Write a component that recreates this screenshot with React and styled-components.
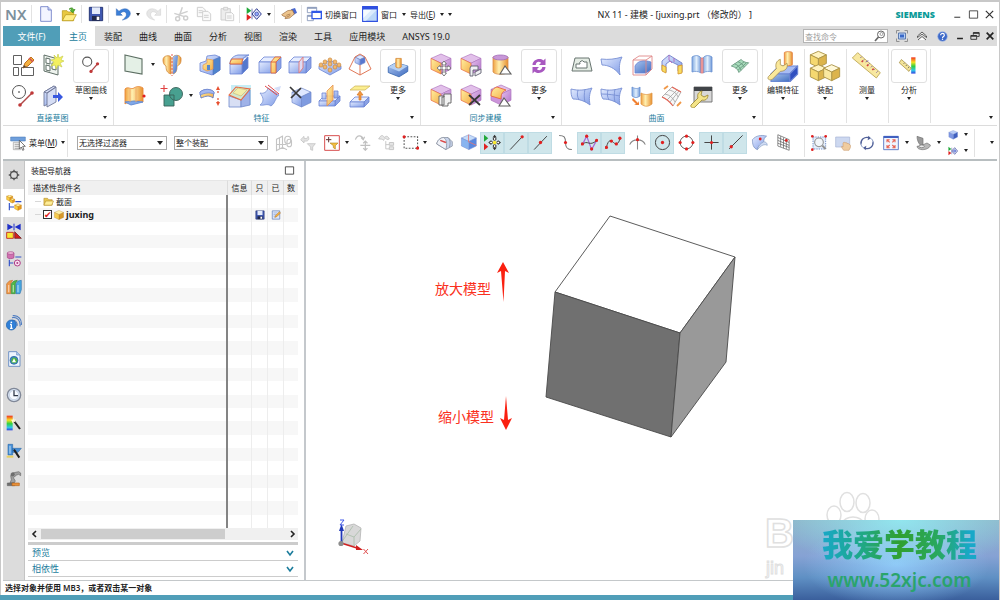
import React, { useState } from 'react';
import styled, { createGlobalStyle } from 'styled-components';

const GlobalStyle = createGlobalStyle`
  * {
    box-sizing: border-box;
  }

  body {
    margin: 0;
    font-family: 'Noto Sans', 'Noto Sans CJK SC', sans-serif;
    font-size: 8px;
    color: #222222;
  }

  button,
  input,
  select {
    font-family: inherit;
    font-size: inherit;
    color: inherit;
    margin: 0;
    padding: 0;
    border: none;
    background: none;
  }

  svg {
    display: block;
    flex: none;
  }
`;

/* ---------- Drawing helpers ---------- */

const Gradients = () => (
  <svg width="0" height="0" style={{ position: 'absolute' }} aria-hidden="true">
    <defs>
      <linearGradient id="blue" x1="0" y1="0" x2="1" y2="1">
        <stop offset="0" stopColor="#e4ecff" />
        <stop offset="1" stopColor="#7f9be6" />
      </linearGradient>
      <linearGradient id="deep" x1="0" y1="0" x2="1" y2="1">
        <stop offset="0" stopColor="#a9c3ee" />
        <stop offset="1" stopColor="#3f6cc0" />
      </linearGradient>
      <linearGradient id="gold" x1="0" y1="0" x2="1" y2="1">
        <stop offset="0" stopColor="#fff0a0" />
        <stop offset="1" stopColor="#f4ac48" />
      </linearGradient>
      <linearGradient id="plum" x1="0" y1="0" x2="1" y2="1">
        <stop offset="0" stopColor="#e6c4ee" />
        <stop offset="1" stopColor="#b070c8" />
      </linearGradient>
      <linearGradient id="tube" x1="0" y1="0" x2="1" y2="0">
        <stop offset="0" stopColor="#7fa8e0" />
        <stop offset="0.5" stopColor="#e2effc" />
        <stop offset="1" stopColor="#6f98d8" />
      </linearGradient>
      <linearGradient id="pipe" x1="0" y1="0" x2="1" y2="0">
        <stop offset="0" stopColor="#f0a040" />
        <stop offset="0.4" stopColor="#fff0b0" />
        <stop offset="1" stopColor="#e89030" />
      </linearGradient>
      <linearGradient id="rainbow" x1="0" y1="0" x2="0" y2="1">
        <stop offset="0" stopColor="#f03020" />
        <stop offset="0.3" stopColor="#f8e020" />
        <stop offset="0.55" stopColor="#30d040" />
        <stop offset="0.8" stopColor="#30c8e8" />
        <stop offset="1" stopColor="#3040e0" />
      </linearGradient>
    </defs>
  </svg>
);

const Hex = ({ x = 2, y = 2, s = 20, top = '#dfe8ff', left = 'url(#blue)', right = '#7f9be0', line = '#7088cc', edge }) => {
  const p = (...list) => list.map(([a, b]) => `${x + a * s},${y + b * s}`).join(' ');
  return (
    <g stroke={line} strokeWidth="0.7" strokeLinejoin="round">
      <polygon points={p([0.5, 0], [1, 0.22], [0.5, 0.46], [0, 0.22])} fill={top} />
      <polygon points={p([0.5, 0.46], [1, 0.22], [1, 0.76], [0.5, 1])} fill={right} />
      <polygon points={p([0, 0.22], [0.5, 0.46], [0.5, 1], [0, 0.76])} fill={left} stroke={edge || line} />
    </g>
  );
};

const Slab = ({ x = 2, y = 6, w = 14, h = 10, d = 5, top = '#e6edff', front = 'url(#blue)', side = '#8ba2e4', line = '#6a84d4' }) => (
  <g stroke={line} strokeWidth="0.8" strokeLinejoin="round">
    <path d={`M${x} ${y + d}l${d} ${-d}h${w}l${-d} ${d}z`} fill={top} />
    <path d={`M${x + w} ${y + d}l${d} ${-d}v${h}l${-d} ${d}z`} fill={side} />
    <rect x={x} y={y + d} width={w} height={h} fill={front} />
  </g>
);

const Dots = ({ at, r = 1.8, fill = '#e02020' }) => (
  <g fill={fill} stroke="none">
    {at.map(([x, y]) => (
      <circle key={`${x}-${y}`} cx={x} cy={y} r={r} />
    ))}
  </g>
);

const SyncCube = () => <Hex y={1} s={20} top="#e2c0ea" left="url(#gold)" right="url(#plum)" line="#b078c0" edge="#e86840" />;

const wrench = 'M4 22l7-7c-1-3 0-6 4-7l-1 4 3 2 4-2c0 4-3 6-6 5l-7 7c-2 2-5 0-4-2z';

const icons = {
  newFile: (
    <g fill="#f3f5ff" stroke="#7080c8" strokeWidth="1.3">
      <path d="M4 1h11l5 5v17H4z" />
      <path d="M15 1v5h5" fill="#c5cff5" />
    </g>
  ),
  open: (
    <g stroke="#b89818" strokeWidth="1.1" strokeLinejoin="round">
      <path d="M2 7h7l2 2h8v13H2z" fill="#e8c840" />
      <path d="M2 22l5-9h16l-5 9z" fill="#ffee88" />
      <path d="M12 5c3-3 6-3 7 1l2-1-3 5-4-3 2-1c-1-2-2-2-4-1z" fill="#58b838" stroke="#388820" />
    </g>
  ),
  save: (
    <g>
      <path d="M2 2h20v20H2z" fill="#4058b0" stroke="#203070" strokeWidth="1.4" />
      <path d="M6 2h12v10H6z" fill="#e4ebfa" />
      <path d="M6 15h12v7H6z" fill="#202848" />
      <path d="M13 16h4v5h-4z" fill="#fff" />
    </g>
  ),
  undo: <path d="M2 4v10h9l-3-3c4-4 10-3 9 3-1 3-3 5-6 7 7-1 12-5 12-10C22 3 12 2 6 8z" fill="#3b7fd8" stroke="#2a60b0" strokeWidth="0.7" />,
  redo: <path d="M22 4v10h-9l3-3c-4-4-10-3-9 3 1 3 3 5 6 7-7-1-12-5-12-10C2 3 12 2 18 8z" fill="#e6e6e6" stroke="#cccccc" strokeWidth="0.7" />,
  cut: (
    <g fill="none" stroke="#cfcfcf" strokeWidth="2.2">
      <path d="M14 2l-5 14M2 11l15 5M22 8l-14 5" />
      <circle cx="7" cy="19" r="3" />
      <circle cx="19" cy="18" r="3" />
    </g>
  ),
  copy: (
    <g fill="#fafafa" stroke="#cccccc" strokeWidth="1.4">
      <path d="M2 2h8l4 4v10H2z" />
      <path d="M10 8h8l4 4v10H10z" />
      <path d="M4 7h6M4 10h6M12 14h7M12 17h7" />
    </g>
  ),
  paste: (
    <g fill="#ededed" stroke="#cccccc" strokeWidth="1.4">
      <path d="M3 4h14v17H3z" />
      <path d="M7 2h6v4H7z" />
      <path d="M10 10h9l3 3v9H10z" fill="#fafafa" />
      <path d="M12 15h7M12 18h7" />
    </g>
  ),
  play: (
    <g>
      <path d="M1 2l7 5-7 5z" fill="#20a838" />
      <path d="M1 12l7 5-7 5z" fill="#e02020" />
      <path d="M9 12l7-8 7 8-7 8z" fill="#e4eaff" stroke="#303c90" strokeWidth="1.5" />
      <path d="M9 4v16" stroke="#303c90" strokeWidth="1" />
      <circle cx="16" cy="12" r="2.8" fill="#90a8ff" stroke="#303c90" />
    </g>
  ),
  hand: (
    <g>
      <path d="M15 5l6-2 3 7-6 4z" fill="#4868d0" />
      <path d="M1 13l9-6 7-1 3 6-7 6-7 1 1-3-4-1z" fill="#edc48c" stroke="#98683c" strokeWidth="1" />
      <path d="M8 14l6-2M8 17l6-3" stroke="#98683c" fill="none" />
    </g>
  ),
  switchWindow: (
    <g fill="#fff" stroke="#8898b8" strokeWidth="1.3">
      <path d="M2 2h14v8H2zM2 14h9v8H2z" />
      <path d="M2 3h14M2 15h9" strokeWidth="2.5" />
      <path d="M9 8h14v11H9z" stroke="#3058e8" strokeWidth="2" />
      <path d="M9 9h14" stroke="#3058e8" strokeWidth="3" />
    </g>
  ),
  window: (
    <g>
      <path d="M1 1h22v22H1z" fill="#bcd8f8" stroke="#3050e0" strokeWidth="1.8" />
      <path d="M2 6h20L6 22H2z" fill="#dcecfd" />
      <path d="M2 6h12L2 18z" fill="#f6fbff" />
      <path d="M1 1h22v4H1z" fill="#3050e0" />
    </g>
  ),
  minimize: <path d="M5 18h13" stroke="#444" strokeWidth="2.4" />,
  maximize: <path d="M3 4h18v16H3z" fill="none" stroke="#444" strokeWidth="2" />,
  close: <path d="M4 4l16 16M20 4L4 20" stroke="#333" strokeWidth="2.6" />,
  boldMinimize: <path d="M5 18h14" stroke="#222" strokeWidth="3.6" />,
  boldClose: <path d="M4 4l16 16M20 4L4 20" stroke="#222" strokeWidth="4" />,
  restore: (
    <g fill="none" stroke="#222" strokeWidth="2">
      <path d="M8 9V4h14v9h-5" />
      <path d="M8 5h14" strokeWidth="3" />
      <path d="M2 11h14v9H2z" />
      <path d="M2 12h14" strokeWidth="3" />
    </g>
  ),
  fullscreen: (
    <g fill="none" stroke="#888" strokeWidth="1.8">
      <path d="M1 7V1h6M17 1h6v6M23 17v6h-6M7 23H1v-6" />
      <path d="M5 6h14v12H5z" fill="#b8d0f4" stroke="#5070a8" />
      <path d="M8 9h8v6H8z" fill="#3868c8" stroke="none" />
    </g>
  ),
  collapse: <path d="M3 12l9-8 9 8v3l-9-7-9 7zM4 20l8-7 8 7" fill="#fff" stroke="#444" strokeWidth="1.7" />,
  help: (
    <g>
      <circle cx="12" cy="12" r="10.500" fill="#3c68c8" stroke="#a0b8e8" strokeWidth="1.4" />
      <path d="M8 9c0-5 8-5 8 0 0 3-4 3-4 6" fill="none" stroke="#fff" strokeWidth="2.6" />
      <circle cx="12" cy="18" r="1.6" fill="#fff" />
    </g>
  ),
  magnifier: (
    <g fill="none" stroke="#666">
      <circle cx="14" cy="9" r="7" strokeWidth="2" />
      <circle cx="15" cy="8" r="3" strokeWidth="1.2" />
      <path d="M9 14l-7 8" strokeWidth="3.4" />
    </g>
  ),

  /* sketch group */
  sketchTask: (
    <g fill="#fff" stroke="#606060" strokeWidth="1">
      <path d="M2.500 2.500h8v9h-8zM2.500 14.500h5v8h-5zM10.500 14.500h12v8h-12z" />
      <path d="M12 15l2-5 6-6 3 3-6 6z" fill="#f4b040" stroke="#c07020" />
      <path d="M18 5l4 4" stroke="#d05050" strokeWidth="1.6" />
      <path d="M12 15l1-3 2 2z" fill="#444" stroke="none" />
    </g>
  ),
  sketch: (
    <g fill="#eef3ee" stroke="#607068" strokeWidth="1">
      <path d="M3 2l14 4v16L3 18z" />
      <path d="M5 5l4 1v5l-4-1zM5 12l4 1v5l-4-1zM11 10l4 1v6l-4-1z" fill="#fff" />
      <path d="M17 1l1 4 4-2-2 4 3 1-4 2 2 4-4-2-2 4-1-4-4 1 3-4-3-2 4-1-1-4 3 3z" fill="#f4f060" stroke="#c8d050" strokeWidth="0.7" />
    </g>
  ),
  profile: (
    <g fill="none" stroke="#555" strokeWidth="1">
      <circle cx="8" cy="8" r="6.500" />
      <path d="M9 21L21 9" stroke="#b04848" strokeWidth="1.4" />
      <Dots at={[[9, 21], [21, 9]]} r={1.800} fill="#c03838" />
      <circle cx="8" cy="8" r="0.500" />
    </g>
  ),
  curveBig: (
    <g fill="none" stroke="#555" strokeWidth="1">
      <circle cx="8.500" cy="8" r="4.200" />
      <path d="M12 17l6-7" stroke="#b04848" strokeWidth="1.2" />
      <Dots at={[[12, 17], [18, 10]]} r={1.500} fill="#c03838" />
    </g>
  ),
  extrudeArrow: (
    <g stroke="#707898" strokeWidth="0.900">
      <path d="M3 8l10-6v15L3 22z" fill="url(#blue)" />
      <path d="M3 8l10-6 2 1-9 6zM6 9l9-6v15l-9 5z" fill="#d5ddf5" />
      <path d="M12 11h5V8l5 5-5 5v-4h-5z" fill="#3858e0" stroke="none" />
    </g>
  ),

  /* feature group */
  datum: <path d="M3 2l17 4v15L3 18z" fill="#e4f0e6" stroke="#5c6e62" strokeWidth="1.1" />,
  revolve: (
    <g stroke="#d08838" strokeWidth="0.800">
      <path d="M3 7c0-5 7-5 8-3v17c-4-1-5-4-5-8-2-1-3-3-3-6z" fill="url(#pipe)" />
      <path d="M13 4c2-3 9-2 8 3 0 4-2 5-4 6 0 5-1 7-4 8z" fill="url(#pipe)" />
      <path d="M13 4c2-2 4-2 5-1l-1 10c0 5-1 7-4 8z" fill="url(#deep)" stroke="none" />
      <path d="M12 1v22" stroke="#e03020" strokeDasharray="2 1.500" />
    </g>
  ),
  pattern: (
    <g stroke="#e88838" strokeWidth="0.900">
      <path d="M3 5c3-3 6 1 9-1s6-2 9 0v14c-3-2-6-1-9 1s-6-2-9 1z" fill="url(#pipe)" />
      <path d="M3 18l6 3 12-3-9-1z" fill="#7fa8e8" stroke="#6088d0" />
      <path d="M8 5v13M14 4v14" stroke="#f0a868" />
      <Dots at={[[22, 12]]} r={1.600} />
    </g>
  ),
  unite: (
    <g stroke="#386058" strokeWidth="0.900">
      <path d="M4 11h10v11H4z" fill="#48a090" />
      <circle cx="16" cy="10" r="6.500" fill="#48a090" />
      <path d="M9 11h5v5" fill="none" />
      <path d="M4 1v7M0.500 4.500h7" stroke="#e04040" strokeWidth="1.1" />
    </g>
  ),
  block: (
    <g>
      <path d="M2 10l6-2 1-5 8-1 5 2v13l-8 5-12-4z" fill="url(#blue)" stroke="#6a84d4" strokeWidth="0.800" />
      <path d="M15 7l7-3v13l-7 5z" fill="#4f84cc" stroke="#5070c0" strokeWidth="0.600" />
      <path d="M5 12l4-2V6l6 1v9l-6 2-4-2z" fill="url(#gold)" stroke="#e89848" strokeWidth="0.700" />
      <path d="M9 12h3v5H9z" fill="#5888cc" />
    </g>
  ),
  blend: (
    <g>
      <Slab x={2} y={4} w={12} h={11} d={6} side="#5478cc" />
      <path d="M2 11c0-5 3-8 8-9h11c-5 1-7 4-7 9z" fill="url(#blue)" stroke="#6a84d4" strokeWidth="0.900" />
      <path d="M2 11c0-2 1-4 2-5h11c-1 1-1 3-1 5z" fill="url(#gold)" stroke="#e06840" strokeWidth="1" />
    </g>
  ),
  trimBody: (
    <g>
      <Slab x={1} y={4} w={17} h={11} d={5} />
      <path d="M13 9l4-5h6l-5 5v11h-5z" fill="url(#gold)" stroke="#e06840" strokeWidth="0.900" />
      <path d="M18 9h-5" stroke="#e06840" />
    </g>
  ),
  splitBody: (
    <g>
      <Slab x={1} y={4} w={17} h={11} d={5} />
      <path d="M11 20V9l4-5v11z" fill="#e0dcf4" stroke="#e07878" strokeWidth="0.900" />
    </g>
  ),
  bumps: (
    <g>
      <path d="M1 13l11-6 11 6v3l-11 6-11-6z" fill="url(#blue)" stroke="#6a84d4" strokeWidth="0.800" />
      <g fill="#f4b868" stroke="#c88840" strokeWidth="0.700">
        {[[12, 7], [7, 9], [17, 9], [3, 12], [12, 11], [21, 12], [7, 14], [17, 14], [12, 17]].map(([x, y]) => (
          <ellipse key={`${x}-${y}`} cx={x} cy={y} rx="1.900" ry="2.100" />
        ))}
      </g>
    </g>
  ),
  draft: (
    <g>
      <Hex x={7} y={2} s={10} right="#5878d0" />
      <path d="M7 4L1 16l11 6 11-6-6-12M12 12v10M7 4l5-3 5 3" fill="none" stroke="#e07858" strokeWidth="1" />
    </g>
  ),
  boss: (
    <g>
      <path d="M3 13l7-4 11 3v5l-8 5-10-4z" fill="url(#deep)" stroke="#3868b0" strokeWidth="0.800" />
      <path d="M3 13l7-4 11 3-8 5z" fill="#b4d0f4" />
      <path d="M10 5h5v8c-1 1-4 1-5 0z" fill="url(#pipe)" stroke="#d89040" strokeWidth="0.800" />
    </g>
  ),
  bend: (
    <g>
      <path d="M2 8c5-4 11-3 14 0l-1 6c-4-3-7-2-12 0z" fill="url(#gold)" stroke="#6078c0" strokeWidth="0.900" />
      <path d="M2 8c5-4 11-3 14 0v2C11 8 7 9 2 11z" fill="#a4b8f0" stroke="#6a84d4" strokeWidth="0.700" />
      <path d="M20 4v6M20 14v6" stroke="#e05030" strokeDasharray="2 1" strokeWidth="1.200" />
      <path d="M18 6l2-4 2 4zM18 18l2 4 2-4z" fill="#e85030" />
    </g>
  ),
  face: (
    <g>
      <path d="M3 1h20v20H3z" fill="#c8eef6" />
      <path d="M1 12l12 4v7H1z" fill="#d8dff4" stroke="#7088cc" strokeWidth="0.800" />
      <path d="M13 16l9-10v15l-9 2z" fill="#9fb2e8" stroke="#7088cc" strokeWidth="0.800" />
      <path d="M1 11L8 3l14 2-9 11z" fill="#d0e8d0" stroke="#e86840" strokeWidth="1.100" />
      <path d="M5 9l5-5 9 2-6 6z" fill="#f2eeaa" stroke="#d0c080" strokeWidth="0.800" />
    </g>
  ),
  sheet: (
    <g>
      <path d="M2 9c4 1 7-1 8-5l11 7c-4 3-4 9-8 11-4-3-7 0-11-1 4-3 4-7 0-12z" fill="url(#blue)" stroke="#7890d4" strokeWidth="0.800" />
      <path d="M7 2l12 9M10 1l11 9" stroke="#e04848" strokeWidth="1" />
      <path d="M16 4l7-2-2 6z" fill="#d4def8" />
    </g>
  ),
  deleteBody: (
    <g>
      <Hex x={4} y={4} s={19} />
      <path d="M2 3l11 11M13 4L3 14" stroke="#383838" strokeWidth="1.700" />
    </g>
  ),
  mirror: (
    <g>
      <Slab x={1} y={12} w={16} h={5} d={5} />
      <path d="M4 9h4v6H4zM16 7h4v7h-4z" fill="url(#blue)" stroke="#6a84d4" strokeWidth="0.800" />
      <path d="M9 7l6-6v15l-6 6z" fill="url(#gold)" stroke="#e89048" strokeWidth="0.900" opacity="0.900" />
    </g>
  ),
  offset: (
    <g>
      <path d="M7 2h15l-5 4H2z" fill="#fbee90" stroke="#d0b860" strokeWidth="0.800" />
      <Slab x={2} y={13} w={14} h={5} d={5} />
      <path d="M13 16v-5h2l-3-4-3 4h2v5z" fill="#f09840" stroke="#d87828" strokeWidth="0.700" />
    </g>
  ),

  /* synchronous modelling */
  moveFace: (
    <g>
      <SyncCube />
      <path d="M15 8l2.500 3H16v3h3v-1.500l3 2.500-3 2.500V16h-3v4h1.500L15 23l-2.500-3H14v-4h-3v1.500L8 15l3-2.500V14h3v-3h-1.500z" fill="#fff" stroke="#707070" strokeWidth="0.900" />
    </g>
  ),
  offsetRegion: (
    <g>
      <SyncCube />
      <path d="M12 13h7v4h-5v6h-3v-8zM16 19l6-3v4l-6 3z" fill="#f0f0f4" stroke="#606070" strokeWidth="0.900" />
    </g>
  ),
  replaceFace: (
    <g>
      <path d="M4 4v15c2 3 12 3 15 0V4z" fill="url(#pipe)" stroke="#d89050" strokeWidth="0.800" />
      <ellipse cx="11.500" cy="4.500" rx="7.500" ry="2.500" fill="#c898d8" stroke="#a068b8" strokeWidth="0.800" />
      <path d="M11 21l5-8 6 8z" fill="#fff" stroke="#606060" strokeWidth="1.100" />
    </g>
  ),
  copyFace: (
    <g>
      <SyncCube />
      <path d="M10 12h5v9h-5zM15 10h7v9h-3v3h-6v-9h2z" fill="#f2f2f2" stroke="#606060" strokeWidth="0.900" />
    </g>
  ),
  deleteFace: (
    <g>
      <SyncCube />
      <path d="M10 11l11 10M21 11L10 21" stroke="#383838" strokeWidth="1.800" />
    </g>
  ),
  resizeBlend: (
    <g>
      <Hex y={1} s={20} top="#e2c0ea" left="#cc94da" right="url(#plum)" line="#b078c0" />
      <path d="M2 12C2 6 5 4 8 3l9 3c-4 2-5 4-5 9z" fill="url(#gold)" stroke="#e86840" strokeWidth="0.900" />
      <path d="M10 22l5-8 6 8z" fill="#fff" stroke="#606060" strokeWidth="1.100" />
    </g>
  ),
  swirl: (
    <g fill="#a858c0">
      <path d="M6 11c0-5 7-7 10-4l2-2v6h-6l2-2c-3-2-5 0-5 2z" />
      <path d="M18 13c0 5-7 7-10 4l-2 2v-6h6l-2 2c3 2 5 0 5-2z" />
    </g>
  ),

  /* surface group */
  outline: (
    <g fill="#e4ece4" stroke="#687470" strokeWidth="1">
      <path d="M5 5h14l3 13H2z" />
      <path d="M6 15v-4h4a2 2 0 014-2h3v6z" fill="#fff" />
    </g>
  ),
  ruled: <path d="M1 6c8 1 14 0 21-2-3 6-3 11-2 18C15 15 8 12 2 12z" fill="url(#blue)" stroke="#7890d4" strokeWidth="0.900" />,
  throughCurves: (
    <g fill="url(#blue)" stroke="#7890d4" strokeWidth="0.900">
      <path d="M1 5c8 2 14 1 21-1-3 6-3 11-2 17C15 17 9 15 3 15 1 12 1 9 1 5z" />
      <path d="M8 6c-1 4-1 6 1 10M15 5c-1 5-1 9 0 13" fill="none" />
    </g>
  ),
  mesh: (
    <g fill="url(#blue)" stroke="#7890d4" strokeWidth="0.900">
      <path d="M1 5c8 2 14 1 21-1-3 6-3 11-2 17C15 17 9 15 3 15 1 12 1 9 1 5z" />
      <path d="M8 6c-1 4-1 6 1 10M15 5c-1 5-1 9 0 13M1 10c8 0 13 1 19 2" fill="none" />
    </g>
  ),
  bounding: (
    <g>
      <path d="M5 13c3-6 10-6 16-4v8l-5 3H5z" fill="url(#deep)" stroke="#6a84d4" strokeWidth="0.800" />
      <path d="M3 7l6-4h13v13l-6 6H3zM3 7h13v15M16 7l6-4" fill="none" stroke="#e08888" strokeWidth="0.900" />
    </g>
  ),
  sweep: (
    <g stroke="#7080c8" strokeWidth="0.900">
      <path d="M2 8l7-6 13 8v9l-4-1v-6l-8-4-4 3v8l-4-2z" fill="url(#blue)" />
      <path d="M2 12l4 2v6l-4-2zM18 13l4-1v8l-4 1z" fill="#f8dc60" stroke="#d89830" />
      <path d="M9 2v5l3 3M14 5v4" fill="none" stroke="#b068c0" />
    </g>
  ),
  ribs: (
    <g stroke="#6890d0" strokeWidth="0.800">
      <path d="M2 4c3-2 7-2 9 1v15c-3-2-6-2-9-1z" fill="url(#tube)" />
      <path d="M13 5c2-3 6-3 9-1v15c-3-1-6-1-9 1z" fill="url(#tube)" />
      <path d="M11 5h2v15h-2z" fill="#f0a8a8" stroke="#e07878" />
    </g>
  ),
  flange: (
    <g stroke="#6890d0" strokeWidth="0.800">
      <path d="M2 3c3 2 6 2 8 0v9c-3 2-5 2-8 0z" fill="url(#tube)" />
      <path d="M11 9c4 2 7 2 11 0v11c-4 3-7 3-11 0z" fill="url(#pipe)" stroke="#e09848" />
      <path d="M3 14l5 5 1-2v4H4l2-1-4-4z" fill="#f08030" stroke="none" />
    </g>
  ),
  grow: (
    <g fill="#f8f8f8" stroke="#a0a0a0" strokeWidth="0.800">
      <path d="M2 13L12 3l9 5-8 14c-3-4-6-7-11-9z" />
      <path d="M5 10c5 1 8 4 10 8M9 6c5 1 8 4 9 7M7 16L17 6M10 18l9-11" fill="none" />
      <path d="M2 13c5 2 8 5 11 9M12 3l9 5" stroke="#e86858" strokeWidth="1.100" fill="none" />
      <path d="M4 5l4-3M17 22l4-4" stroke="#f09848" strokeWidth="1.800" />
    </g>
  ),
  tool: (
    <g>
      <path d="M4 3h18v15H4z" fill="#d8d8d8" stroke="#707070" strokeWidth="0.900" />
      <path d="M4 3h18v4H4z" fill="#404448" />
      <path d={wrench} fill="#f4e488" stroke="#a08c38" strokeWidth="0.900" transform="translate(-3 -1)" />
    </g>
  ),
  greenMesh: (
    <g fill="#a8dcbc" stroke="#6a9880" strokeWidth="0.800">
      <path d="M4 12l9-6c2 2 4 3 7 3l-9 9c-1-3-3-5-7-6z" />
      <path d="M7 10c3 1 5 3 6 6M10 8c3 1 5 3 6 5M8 14l8-6M10 16l8-7" fill="none" />
    </g>
  ),

  /* large single buttons */
  editFeature: (
    <g>
      <Slab x={3} y={12} w={14} h={6} d={6} top="#a8bcf4" front="url(#deep)" side="#3050c0" />
      <path d="M13 2c0-1 6-1 6 0v9c-1 1-5 1-6 0z" fill="url(#pipe)" stroke="#e07838" strokeWidth="0.600" />
      <path d="M1 20l6-6c-1-3 0-6 3-7v4l2 1 3-2c1 3-1 6-5 6l-6 6c-2 1-4 0-3-2z" fill="#fae89a" stroke="#a89050" strokeWidth="0.600" />
    </g>
  ),
  assembly: (
    <g strokeWidth="0.500">
      <Hex x={1} y={1} s={12} top="#fff3c0" left="#f5d870" right="#dcb44c" line="#ac9448" />
      <Hex x={1} y={11} s={12} top="#fff3c0" left="#f5d870" right="#dcb44c" line="#ac9448" />
      <Hex x={11} y={11} s={12} top="#fff8d8" left="#fae8a0" right="#dcb44c" line="#ac9448" />
    </g>
  ),
  measure: (
    <g stroke="#b8a048" strokeWidth="0.600">
      <path d="M5 2l17 15-3 4L1 6z" fill="#f8e8a0" />
      <path d="M7 6l1-1M9 8l1-1M11 9l2-1M13 11l1-1M15 13l1-1M17 15l1-1M19 17l1-1" stroke="#7050a0" />
      <path d="M8 9l1-1M12 12l1-1M16 15l1-1" stroke="#d04040" strokeWidth="1.200" />
    </g>
  ),
  analysis: (
    <g>
      <path d="M14 4h4v15h-4z" fill="url(#rainbow)" />
      <path d="M5 6l9 8-2 3-9-8z" fill="#f4e498" stroke="#988030" strokeWidth="0.600" />
      <path d="M7 10l1-1M9 12l1-1M11 14l1-1" stroke="#555" strokeWidth="0.700" />
    </g>
  ),

  /* selection bar */
  menu: (
    <g>
      <path d="M1 3h22v6H1z" fill="#6f9fdc" stroke="#4878b8" strokeWidth="0.800" />
      <path d="M5 11h11v11H5z" fill="#f0f0f0" stroke="#a0a0a0" />
      <path d="M7 14h7M7 17h7M7 20h7" stroke="#888" />
      <path d="M14 8v13l3-3 2 5 2-1-2-5h4z" fill="#fff" stroke="#555" strokeWidth="1.200" />
    </g>
  ),
  ghostCube: (
    <g fill="none" stroke="#c4c4c4" strokeWidth="1.500">
      <path d="M2 7l8-4v15l-8 4zM10 3v15l6 3M2 14h13M6 5v15" />
      <rect x="13" y="3" width="8" height="10" rx="4" />
      <rect x="16" y="7" width="6" height="10" rx="3" />
    </g>
  ),
  ghostFilter: (
    <g fill="#e2e2e2" stroke="#c4c4c4" strokeWidth="1.200">
      <path d="M1 7l5-5v3c5 1 6-1 6-3 3 5 0 8-6 7v3z" />
      <path d="M11 13h12l-4 5v5l-3-1v-4z" />
    </g>
  ),
  filter: (
    <g>
      <path d="M1 1h22v22H1z" fill="#fff" stroke="#d85050" strokeWidth="1.500" />
      <path d="M7 3v8M3 7h8" stroke="#603030" strokeWidth="1.500" />
      <path d="M9 12h12l-4 4v5l-3-2v-3z" fill="#f4c040" stroke="#b08020" strokeWidth="0.900" />
    </g>
  ),
  ghostMove: (
    <g fill="none" stroke="#c0c0c0" strokeWidth="1.700">
      <path d="M2 8c2-7 9-7 11-1M10 5l3 3 2-4M16 10v13M9 16h14M13 13l3-3 3 3M13 20l3 3 3-3" />
    </g>
  ),
  ghostTree: (
    <g fill="#e6e6e6" stroke="#c4c4c4" strokeWidth="1.300">
      <path d="M1 7c3-6 6-6 8-2 3-3 5-2 7 2l-3 1c-2-3-4-2-5 1-2-2-4-2-7-2z" />
      <path d="M11 10v11h5M11 15h5" fill="none" />
      <path d="M16 12h6v4h-6zM16 18h6v4h-6z" />
    </g>
  ),
  marquee: (
    <g fill="none" stroke="#555" strokeWidth="1.500">
      <path d="M3 4h19v16H3z" strokeDasharray="2.500 2" />
      <Dots at={[[3, 4], [22, 20]]} r={2.200} />
    </g>
  ),
  eraser: (
    <g stroke="#808898" strokeWidth="1">
      <path d="M1 14c1-5 5-9 10-9h6l6 6v6l-9 5z" fill="#c8d4ec" />
      <path d="M1 14c1-5 5-9 10-9 4 3 5 8 3 17z" fill="#f0f2f8" />
      <path d="M17 5c4 4 3 9 2 14" fill="none" />
      <path d="M6 9l8 3" stroke="#d84848" strokeWidth="2" />
    </g>
  ),
  solidFace: (
    <g>
      <Hex x={2} y={1} s={21} top="#c4dcfa" left="#88b4f0" right="#5888e0" />
      <path d="M12 1v10l11 5" fill="none" stroke="#e07878" strokeWidth="1.200" />
    </g>
  ),
  snapMove: (
    <g>
      <path d="M0 1l6 5-6 5z" fill="#20a838" />
      <path d="M0 13l6 5-6 5z" fill="#e02020" />
      <path d="M15 1l3 4h-6zM15 23l3-4h-6zM24 12l-4-3v6zM6 12l4-3v6z" fill="#333" />
      <g fill="#fff" stroke="#333" strokeWidth="1.400">
        <circle cx="15" cy="7" r="2" />
        <circle cx="15" cy="17" r="2" />
        <circle cx="10" cy="12" r="2" />
        <circle cx="20" cy="12" r="2" />
      </g>
      <circle cx="15" cy="12" r="2.600" fill="#f8e830" />
    </g>
  ),
  snapEnd: (
    <g>
      <path d="M3 22L20 4" stroke="#444" strokeWidth="1.400" />
      <Dots at={[[20, 4]]} r={2.300} />
    </g>
  ),
  snapMid: (
    <g>
      <path d="M3 22L21 3" stroke="#444" strokeWidth="1.400" />
      <Dots at={[[12, 12]]} r={2.300} />
    </g>
  ),
  snapControl: (
    <g fill="none" stroke="#777" strokeWidth="1.500">
      <path d="M3 2c7 0 9 2 9 10s3 10 9 10" />
      <Dots at={[[12, 12]]} r={2.200} />
    </g>
  ),
  snapPole: (
    <g fill="none">
      <path d="M2 15L8 3l7 19 7-13" stroke="#a868d8" strokeWidth="1.700" />
      <path d="M2 15c7-8 10 4 20-6" stroke="#444" strokeWidth="1.400" />
      <Dots at={[[2, 14], [8, 3], [15, 21], [22, 9]]} r={2.300} />
    </g>
  ),
  snapSpline: (
    <g fill="none">
      <path d="M2 19C5 6 9 9 12 12s7 3 9-5" stroke="#444" strokeWidth="1.400" />
      <Dots at={[[2, 19], [9, 10], [16, 14], [21, 6]]} r={2.300} />
    </g>
  ),
  snapIntersect: (
    <g fill="none" stroke="#888" strokeWidth="1.500">
      <path d="M1 15c4-9 18-9 22 0M12 2v20" />
      <Dots at={[[12, 8]]} r={2.200} />
    </g>
  ),
  snapCenter: (
    <g fill="none" stroke="#444" strokeWidth="1.400">
      <circle cx="12" cy="12" r="10" />
      <Dots at={[[12, 12]]} r={2.300} />
    </g>
  ),
  snapQuadrant: (
    <g fill="none" stroke="#666" strokeWidth="1.400">
      <circle cx="12" cy="12" r="9" />
      <Dots at={[[12, 3], [21, 12], [12, 21], [3, 12]]} r={2.200} />
    </g>
  ),
  snapPoint: (
    <g stroke="#444" strokeWidth="1.400">
      <path d="M12 2v20M2 12h20" />
      <Dots at={[[12, 12]]} r={2.200} />
    </g>
  ),
  snapTangent: (
    <g stroke="#444" strokeWidth="1.400">
      <path d="M3 21L22 2" />
      <Dots at={[[6, 18]]} r={2.300} />
    </g>
  ),
  snapFace: (
    <g>
      <path d="M2 8C7 2 15 1 22 3c-3 2-4 4-4 8-5 3-8 6-9 11C3 20 2 14 2 8z" fill="url(#blue)" stroke="#7890c0" strokeWidth="1" />
      <path d="M18 11c3 0 5 2 5 5l-3-1c-4 0-7 3-11 7 1-5 4-8 9-11z" fill="#d0dcf4" stroke="#8098c0" strokeWidth="0.800" />
      <Dots at={[[13, 7]]} r={2} />
    </g>
  ),
  snapGrid: (
    <g fill="none" stroke="#606060" strokeWidth="1">
      <path d="M4 1l16 7v15L4 17zM8 3v15M12 5v15M16 7v14M4 5l16 7M4 9l16 7M4 13l16 6" />
      <Dots at={[[16, 9]]} r={2} />
    </g>
  ),
  zoomBox: (
    <g>
      <path d="M3 3h19v18H3z" fill="#e4eefc" stroke="#5878b8" strokeWidth="1.200" strokeDasharray="2 1.500" />
      <Dots at={[[2, 2], [22, 2], [2, 22]]} r={2} />
      <circle cx="12" cy="11" r="6.500" fill="#f2f6fa" stroke="#909090" strokeWidth="1.600" />
      <path d="M17 16l5 5" stroke="#909090" strokeWidth="3" />
    </g>
  ),
  pan: (
    <g>
      <path d="M1 3h21v15H1z" fill="#cdd8f0" stroke="#a8b4d4" />
      <path d="M13 23c-2-3-4-5-3-6l2 1v-6c1-2 3-1 3 0 1-1 3-1 3 1 2-1 3 0 3 1 2 0 3 2 2 5l-2 4z" fill="#f0ccA0" stroke="#c89868" strokeWidth="0.800" />
    </g>
  ),
  rotate: (
    <g fill="none" stroke="#506098" strokeWidth="2">
      <path d="M3 14C2 7 8 2 15 4M21 10c1 7-5 12-12 10" />
      <path d="M14 1l4 4-5 3zM10 23l-4-4 5-3z" fill="#506098" stroke="none" />
      <path d="M3 12c0 4 1 6 4 7M21 12c0-4-1-6-4-7" stroke="#90a0c8" strokeWidth="1.500" />
    </g>
  ),
  fit: (
    <g>
      <path d="M1 2h22v20H1z" fill="#f0f5ff" stroke="#5070c0" strokeWidth="1.300" />
      <path d="M1 3h22" stroke="#4060c0" strokeWidth="3" />
      <path d="M6 11V7h4M14 7h4v4M18 15v4h-4M10 19H6v-4M7 8l3 3M17 8l-3 3M17 18l-3-3M7 18l3-3" fill="none" stroke="#e86050" strokeWidth="1.600" />
    </g>
  ),
  section: (
    <g stroke="#707070" strokeWidth="1">
      <path d="M3 2l9 3v12l-3-1C5 13 3 7 3 2z" fill="#9a9a9a" />
      <path d="M9 16l9-4 5 3c0 4-6 7-12 7-4 0-8-2-8-5z" fill="#b8b8b8" />
      <ellipse cx="10" cy="17" rx="4" ry="2" fill="#ececec" />
    </g>
  ),
  shaded: <Hex x={2} y={1} s={21} top="#b8ccf6" left="#7f98e4" right="#4060c0" />,

  /* resource bar */
  gear: (
    <g fill="none" stroke="#505050">
      <circle cx="12" cy="12" r="6" strokeWidth="2.200" />
      <path d="M12 3v3M12 18v3M3 12h3M18 12h3M6 6l2 2M16 16l2 2M18 6l-2 2M8 16l-2 2" strokeWidth="2.200" />
    </g>
  ),
  navAssembly: (
    <g>
      <Hex x={1} y={0} s={9} top="#fff0a0" left="#fcd040" right="#e89820" line="#c88818" />
      <Hex x={6} y={5} s={7} top="#fff0a0" left="#fcd040" right="#e89820" line="#c88818" />
      <path d="M5 12v11M5 18h7M14 10h9" fill="none" stroke="#3050c8" strokeWidth="1.700" />
      <Hex x={13} y={13} s={10} top="#fff0a0" left="#fcd040" right="#e89820" line="#c88818" />
    </g>
  ),
  navConstraint: (
    <g>
      <path d="M2 1l9 5-9 5zM22 1l-9 5 9 5z" fill="#2030c8" />
      <path d="M12 1v10" stroke="#2030c8" strokeWidth="1.500" />
      <path d="M1 14h10v9H1z" fill="#f8e830" stroke="#c02020" strokeWidth="1.300" />
      <path d="M13 13l10 10H13z" fill="#d02020" stroke="#601010" />
    </g>
  ),
  navPart: (
    <g>
      <path d="M2 3v7c2 2 8 2 10 0V3z" fill="#d070b0" stroke="#a04080" strokeWidth="0.900" />
      <ellipse cx="7" cy="3" rx="5" ry="2" fill="#f0b8dc" stroke="#a04080" strokeWidth="0.900" />
      <path d="M5 13v10M5 18h6M14 9h9" stroke="#3050c8" strokeWidth="1.700" />
      <circle cx="17" cy="18" r="4.500" fill="#f8e0f0" stroke="#b04088" strokeWidth="1.500" />
      <circle cx="17" cy="18" r="1.500" fill="#b04088" />
    </g>
  ),
  library: (
    <g strokeWidth="0.800">
      <path d="M1 7l4-4 5-1-3 5v15H1z" fill="#f09848" stroke="#b06020" />
      <path d="M8 7l4-4 5-1-3 5v15H8z" fill="#50b848" stroke="#287828" />
      <path d="M15 7l3-4 5-1v14l-2 6h-6z" fill="#48a8e0" stroke="#2068a8" />
      <path d="M3 9h2v11H3zM10 9h2v11h-2zM17 9h2v11h-2z" fill="#fff" opacity="0.500" />
    </g>
  ),
  info: (
    <g fill="none">
      <path d="M9 4c8-2 13 5 12 13M10 1c9-1 14 6 13 14M9 8c5-1 8 3 8 8" stroke="#4878c0" strokeWidth="1.600" />
      <circle cx="8" cy="15" r="7.500" fill="#3080d8" stroke="#2060a8" />
      <path d="M8 14v6M6 14h2M6 20h4" stroke="#fff" strokeWidth="2" />
      <circle cx="8" cy="11" r="1.300" fill="#fff" />
    </g>
  ),
  browser: (
    <g>
      <path d="M4 1h12l5 5v17H4z" fill="#eef5ff" stroke="#6088c0" strokeWidth="1.300" />
      <path d="M16 1v5h5" fill="#b8d0f0" stroke="#6088c0" />
      <circle cx="12" cy="14" r="6" fill="#3888c8" stroke="#286098" />
      <path d="M8 17c-1-6 4-9 7-6s2 4 1 6c-3 2-5 2-8 0z" fill="#50b040" />
      <path d="M12 11l3 6h-6z" fill="#fff" />
    </g>
  ),
  clock: (
    <g fill="none">
      <circle cx="12" cy="12" r="10" fill="#d8e4f4" stroke="#808898" strokeWidth="2" />
      <circle cx="12" cy="12" r="7" fill="#f6faff" stroke="#b8c4d8" />
      <path d="M12 5v8h6" stroke="#303848" strokeWidth="1.900" />
    </g>
  ),
  palette: (
    <g>
      <path d="M1 1h9v22H1z" fill="url(#rainbow)" />
      <path d="M12 9l9 12" stroke="#202020" strokeWidth="3" />
      <path d="M11 4l1 3 3-1-2 3 2 2-4-1-2 2V9L7 7l3 0z" fill="#fff8d0" />
    </g>
  ),
  process: (
    <g>
      <path d="M3 2h7v16H3zM10 8h13l-5 6h-8z" fill="#4890d8" stroke="#2868a8" strokeWidth="0.900" />
      <path d="M5 4h2v12H5z" fill="#a8d0f0" />
      <path d="M1 19h10v3H1z" fill="#e8d060" />
      <path d="M12 10l8 12" stroke="#202020" strokeWidth="3" />
    </g>
  ),
  robot: (
    <g fill="#a0a0a0" stroke="#606060" strokeWidth="0.900">
      <path d="M10 3l9-2 3 2v4l-3-2-3 1-5 4 3 5-2 3H6l2-5-1-6z" />
      <circle cx="10" cy="5" r="2.500" fill="#707070" />
      <path d="M2 18h11v4H2z" fill="#707070" />
      <path d="M9 18h11v4H9z" fill="#e89038" stroke="#b06018" />
    </g>
  ),
  folder: (
    <g stroke="#b08828" strokeWidth="1.200">
      <path d="M2 5h8l2 3h8v12H2z" fill="#e8c850" />
      <path d="M2 20l4-9h17l-4 9z" fill="#ffee98" />
    </g>
  ),
  part: <Hex x={1} y={1} s={22} top="#fff0a8" left="#f8cc50" right="#d89828" line="#a87818" />,
  edit: (
    <g>
      <path d="M3 2h18v20H3z" fill="#dce6fa" stroke="#5070b0" strokeWidth="1.500" />
      <path d="M6 7h9M6 11h7M6 15h5" stroke="#6080c0" />
      <path d="M9 18l2-5 9-9 3 3-9 9z" fill="#f0b040" stroke="#a86820" strokeWidth="1" />
    </g>
  ),
};

const Icon = ({ name, size = 24 }) => (
  <svg width={size} height={size} viewBox="0 0 24 24" aria-hidden="true">
    {icons[name]}
  </svg>
);

const CaretBox = styled.span`
  display: flex;
  align-items: center;
  justify-content: center;
  width: ${(props) => props.$width || 8}px;
  flex: none;
`;

const Caret = ({ width }) => (
  <CaretBox $width={width}>
    <svg width="4" height="3" viewBox="0 0 4 3" aria-hidden="true">
      <path d="M0 0h4L2 3z" fill="#222" />
    </svg>
  </CaretBox>
);

/* ---------- Frame ---------- */

const Frame = styled.div`
  position: relative;
  display: flex;
  flex-direction: column;
  width: 100%;
  height: 100vh;
  min-height: 480px;
  overflow: hidden;
  background-color: #ffffff;
  border-top: 2px solid #c8c8c8;
  border-right: 1px solid #c8c8c8;
`;

const Body = styled.div`
  flex: 1;
  min-height: 0;
  display: flex;
  flex-direction: column;
  padding: 0 2px;
  border-left: 1px solid #c8c8c8;
`;

/* ---------- Title bar ---------- */

const TitleBar = styled.header`
  display: flex;
  align-items: center;
  height: 24px;
  flex: none;
`;

const Brand = styled.span`
  width: 27px;
  padding-left: 2px;
  font-size: 15px;
  line-height: 20px;
  font-weight: 600;
  color: #7d919c;
`;

const Divider = styled.span`
  width: 1px;
  height: ${(props) => props.$height || 18}px;
  margin: 0 2px 0 1px;
  background-color: #e2e2e2;
  flex: none;
`;

const IconButton = styled.button`
  display: flex;
  align-items: center;
  justify-content: center;
  width: ${(props) => props.$width || 23}px;
  height: 20px;
  flex: none;
`;

const LabelButton = styled.button`
  display: flex;
  align-items: center;
  gap: 3px;
  height: 20px;
  padding-left: ${(props) => props.$pad || 2}px;
  white-space: nowrap;
  flex: none;
`;

const Title = styled.h1`
  flex: 1;
  margin: 0;
  font-size: 9px;
  font-weight: 400;
  text-align: center;
  white-space: pre;
`;

const Vendor = styled.span`
  margin-right: 14px;
  font-family: 'Open Sans', sans-serif;
  font-size: 9px;
  font-weight: 800;
  color: #0a9a98;
`;

/* ---------- Tabs ---------- */

const TabBar = styled.nav`
  display: flex;
  align-items: stretch;
  height: 20px;
  flex: none;
  background-color: #dcdcdc;
`;

const FileButton = styled.button`
  width: 57px;
  font-size: 9px;
  color: #ffffff;
  background-color: #509eb8;
`;

const Tab = styled.button`
  padding: 0 8px 0 9px;
  font-size: 9px;
  white-space: nowrap;
  color: ${(props) => (props.$active ? '#1b7c9c' : '#222222')};
  background-color: ${(props) => (props.$active ? '#ffffff' : 'transparent')};
`;

const TabTools = styled.div`
  display: flex;
  align-items: center;
  margin-left: auto;
`;

const Search = styled.label`
  display: flex;
  align-items: center;
  width: 85px;
  height: 14px;
  margin-right: 4px;
  padding: 0 1px;
  background-color: #ffffff;
  border: 1px solid #b4b4b4;

  input {
    flex: 1;
    min-width: 0;
    outline: none;
  }

  input::placeholder {
    color: #a0a0a0;
  }
`;

/* ---------- Ribbon ---------- */

const Ribbon = styled.div`
  display: flex;
  height: 80px;
  flex: none;
  padding-top: 3px;
  border-bottom: 1px solid #dcdcdc;
`;

const Group = styled.section`
  display: flex;
  flex-direction: column;
  padding-left: 5px;
  padding-bottom: 2px;
  border-right: 1px solid #e2e2e2;
  flex: none;
`;

const GroupTools = styled.div`
  display: flex;
  height: 62px;
`;

const ToolRows = styled.div`
  display: flex;
  flex-direction: column;
  width: ${(props) => props.$width || 'auto'};
`;

const ToolRow = styled.div`
  display: flex;
  height: 31px;
`;

const Tool = styled.button`
  display: flex;
  align-items: center;
  justify-content: center;
  width: 30px;
  height: 31px;
  flex: none;
`;

const BigTool = styled.button`
  display: flex;
  flex-direction: column;
  align-items: center;
  width: 36px;
  margin: 0 4px 0 5px;
  line-height: 14px;
  white-space: nowrap;
`;

const BigIcon = styled.span`
  display: flex;
  align-items: center;
  justify-content: center;
  width: 36px;
  height: 34px;
  border: 1px solid ${(props) => (props.$plain ? 'transparent' : '#e0e0e0')};
  border-radius: 3px;
`;

const GroupFooter = styled.div`
  display: flex;
  align-items: center;
  height: 14px;
  color: #1b7c9c;

  span:first-child {
    flex: 1;
    text-align: center;
  }
`;

const SingleGroup = styled.section`
  width: 42px;
  margin-bottom: 2px;
  border-right: 1px solid #e2e2e2;
  flex: none;

  ${BigTool} {
    margin: 0 3px 0 2px;
  }
`;

const RibbonEnd = styled.div`
  display: flex;
  align-items: flex-end;
  margin-left: auto;
  padding: 0 2px 6px 0;
`;

/* ---------- Selection bar ---------- */

const SelectionBar = styled.div`
  display: flex;
  align-items: center;
  height: 35px;
  flex: none;
  border-bottom: 2px solid #b8bec0;
`;

const SelectBox = styled.span`
  position: relative;
  display: flex;
  align-items: center;
  width: ${(props) => props.$width}px;
  margin-left: 7px;
  flex: none;

  select {
    appearance: none;
    width: 100%;
    height: 14px;
    padding-left: 1px;
    line-height: 12px;
    background-color: #ffffff;
    border: 1px solid #a8a8a8;
  }

  svg {
    position: absolute;
    right: 4px;
    pointer-events: none;
  }
`;

const SnapGroup = styled.div`
  display: flex;
  margin-right: 1px;

  &:first-of-type {
    margin-left: 4px;
  }
`;

const SnapButton = styled.button`
  display: flex;
  align-items: center;
  justify-content: center;
  width: 24px;
  height: 22px;
  background-color: ${(props) => (props.$on ? '#cfe6eb' : 'transparent')};
  border: ${(props) => (props.$on ? '1px solid #bfdce4' : 'none')};
  flex: none;
`;

const Stack = styled.div`
  display: flex;
  flex-direction: column;
  width: 30px;

  button {
    display: flex;
    align-items: center;
    gap: 4px;
    height: 16px;
    padding-left: 5px;
  }
`;

const BarEnd = styled.div`
  display: flex;
  align-items: center;
  margin-left: auto;
`;

/* ---------- Work area ---------- */

const Work = styled.main`
  flex: 1;
  min-height: 0;
  display: flex;
  border-bottom: 1px solid #c4c8ca;
`;

const Rail = styled.nav`
  display: flex;
  flex-direction: column;
  width: 22px;
  flex: none;
  background-color: #dcdcdc;
  border-right: 1px solid #c4c4c4;
`;

const RailButton = styled.button`
  display: flex;
  align-items: center;
  justify-content: center;
  height: 28px;
  flex: none;
  margin-top: ${(props) => (props.$gap ? 8 : 0)}px;
  background-color: ${(props) => (props.$active ? '#ffffff' : 'transparent')};
`;

const Navigator = styled.aside`
  display: flex;
  flex-direction: column;
  width: 281px;
  flex: none;
  padding: 0 6px 3px 3px;
  border-right: 2px solid #c4c8cc;
`;

const PanelTitle = styled.div`
  display: flex;
  align-items: center;
  justify-content: space-between;
  height: 19px;
  padding: 0 3px;
  flex: none;

  h2 {
    margin: 0;
    font-size: 8px;
    font-weight: 400;
  }
`;

const TableArea = styled.div`
  flex: 1;
  min-height: 0;
  overflow: hidden;
`;

const Tree = styled.table`
  width: 100%;
  height: 100%;
  table-layout: fixed;
  border-collapse: separate;
  border-spacing: 0;

  thead {
    height: 15px;
  }

  th {
    height: 15px;
    padding: 0;
    font-weight: 400;
    line-height: 12px;
    background-color: #f0f0f0;
    border-right: 1px solid #dcdcdc;
    border-top: 1px solid #e6e6e6;
    white-space: nowrap;
    overflow: hidden;
  }

  th:first-child {
    padding-left: 5px;
    text-align: left;
  }

  td {
    height: 13px;
    padding: 0;
    border-right: 1px solid #ededed;
  }

  td:first-child {
    border-right: 2px solid #848484;
  }

  td:last-child,
  th:last-child {
    border-right: none;
  }

  tbody tr:nth-child(even) {
    background-color: #f7f7f7;
  }

  td > svg {
    margin: 0 auto;
  }
`;

const Node = styled.label`
  display: flex;
  align-items: center;
  gap: 2px;
  height: 12px;
  padding-left: 7px;
  font-size: ${(props) => (props.$bold ? 9 : 8)}px;
  line-height: 12px;
  font-weight: ${(props) => (props.$bold ? 700 : 400)};

  &::before {
    content: '';
    width: 6px;
    height: 1px;
    background-color: #d8d8d8;
  }
`;

const Check = styled.input`
  appearance: none;
  display: flex;
  align-items: center;
  justify-content: center;
  width: 9px;
  height: 9px;
  border: 1px solid #333333;
  background-color: #ffffff;

  &:checked::after {
    content: '✔';
    font-size: 9px;
    line-height: 8px;
    color: #e02020;
  }
`;

const ScrollBar = styled.div`
  display: flex;
  align-items: center;
  height: 12px;
  flex: none;
  background-color: #f0f0f0;
`;

const ScrollThumb = styled.div`
  width: 68%;
  height: 10px;
  background-color: #cdcdcd;
`;

const ScrollArrow = styled.button`
  display: flex;
  align-items: center;
  justify-content: center;
  width: 13px;
  height: 12px;
  margin-left: ${(props) => (props.$end ? 'auto' : '0')};
`;

const Splitter = styled.div`
  height: 3px;
  margin-top: 2px;
  flex: none;
  background-color: #cccccc;
`;

const Section = styled.button`
  display: flex;
  align-items: center;
  justify-content: space-between;
  height: 16px;
  padding: 0 4px;
  flex: none;
  font-size: 9px;
  color: #1b7c9c;
  border-bottom: 1px solid #cccccc;
`;

/* ---------- Canvas ---------- */

const Canvas = styled.section`
  position: relative;
  flex: 1;
  overflow: hidden;
`;

const Placed = styled.div`
  position: absolute;
  left: ${(props) => props.$x}px;
  top: ${(props) => props.$y}px;
`;

const Note = styled(Placed)`
  display: flex;
  align-items: flex-end;
  gap: 6px;
  font-size: 14px;
  line-height: 26px;
  color: #fa3020;
`;

const Watermark = styled.div`
  position: absolute;
  right: 150px;
  bottom: 0;
`;

const StatusBar = styled.footer`
  height: 14px;
  flex: none;
  padding-left: 2px;
  font-size: 8px;
  line-height: 13px;
  font-weight: 600;
`;

const BottomStripe = styled.div`
  height: 5px;
  flex: none;
  background-color: #509eb8;
`;

const SiteBadge = styled.a`
  position: absolute;
  right: -1px;
  bottom: 0;
  display: flex;
  flex-direction: column;
  align-items: center;
  width: 207px;
  height: 80px;
  padding-left: 6px;
  text-decoration: none;
  background: radial-gradient(ellipse 60% 60% at 52% 0%, rgba(146, 232, 240, 0.95), rgba(146, 220, 245, 0) 100%),
    radial-gradient(ellipse 45% 55% at 50% 55%, rgba(146, 205, 252, 0.9), rgba(146, 205, 252, 0)),
    linear-gradient(180deg, #8fb4c8 0%, #86a2d4 45%, #5f90c4 72%, #3a5f9c 100%);
`;

const SiteName = styled.span`
  font-size: 31px;
  line-height: 40px;
  margin-top: 4px;
  font-weight: 900;
  color: transparent;
  background: linear-gradient(90deg, #18a8c8 0%, #20a880 28%, #30a030 50%, #28a860 75%, #18a8c8 95%);
  background-clip: text;
  -webkit-background-clip: text;
`;

const SiteUrl = styled.span`
  font-size: 19px;
  line-height: 24px;
  font-weight: 600;
  margin-top: 4px;
  color: #2aa46c;
`;

/* ---------- Data ---------- */

const tabs = ['主页', '装配', '曲线', '曲面', '分析', '视图', '渲染', '工具', '应用模块', 'ANSYS 19.0'];

const featureRows = [
  ['block', 'blend', 'trimBody', 'splitBody', 'bumps', 'draft'],
  ['bend', 'face', 'sheet', 'deleteBody', 'mirror', 'offset'],
];

const syncRows = [
  ['moveFace', 'offsetRegion', 'replaceFace'],
  ['copyFace', 'deleteFace', 'resizeBlend'],
];

const surfaceRows = [
  ['outline', 'ruled', 'bounding', 'sweep', 'ribs'],
  ['throughCurves', 'mesh', 'flange', 'grow', 'tool'],
];

const singles = [
  { icon: 'editFeature', label: '编辑特征', plain: true },
  { icon: 'assembly', label: '装配', plain: true },
  { icon: 'measure', label: '测量', plain: true },
  { icon: 'analysis', label: '分析' },
];

const snapGroups = [
  ['eraser', 'solidFace', 'snapMove', 'snapEnd', 'snapMid'],
  ['snapControl', 'snapPole', 'snapSpline', 'snapIntersect'],
  ['snapCenter', 'snapQuadrant'],
  ['snapPoint', 'snapTangent', 'snapFace', 'snapGrid'],
];

const railItems = [
  { icon: 'gear', size: 14 },
  { icon: 'navAssembly', active: true },
  { icon: 'navConstraint' },
  { icon: 'navPart' },
  { icon: 'library' },
  { icon: 'info', gap: true },
  { icon: 'browser', gap: true },
  { icon: 'clock', gap: true },
  { icon: 'palette' },
  { icon: 'process' },
  { icon: 'robot' },
];

const blankRows = Array.from({ length: 23 }, (_, i) => i);

/* ---------- Parts ---------- */

const Tools = ({ rows }) => (
  <ToolRows>
    {rows.map((row, i) => (
      <ToolRow key={i}>
        {row.map((name) => (
          <Tool key={name} type="button" aria-label={name}>
            <Icon name={name} />
          </Tool>
        ))}
      </ToolRow>
    ))}
  </ToolRows>
);

const Big = ({ icon, label, plain }) => (
  <BigTool type="button">
    <BigIcon $plain={plain}>
      <Icon name={icon} size={plain ? 32 : 26} />
    </BigIcon>
    {label}
    <Caret />
  </BigTool>
);

const Footer = ({ label }) => (
  <GroupFooter>
    <span>{label}</span>
    <Caret width={16} />
  </GroupFooter>
);

const QuickAccess = ({ name }) => (
  <IconButton type="button" aria-label={name}>
    <Icon name={name} size={16} />
  </IconButton>
);

const Chevron = ({ d }) => (
  <svg width="8" height="8" viewBox="0 0 8 8" aria-hidden="true">
    <path d={d} fill="none" stroke="currentColor" strokeWidth="1.600" />
  </svg>
);

const App = () => {
  const [activeTab, setActiveTab] = useState('主页');
  const [loaded, setLoaded] = useState(true);
  const [snaps, setSnaps] = useState([
    'snapMove', 'snapEnd', 'snapMid', 'snapPole', 'snapSpline', 'snapCenter', 'snapPoint', 'snapTangent',
  ]);

  const toggleSnap = (name) => {
    setSnaps((prev) => (prev.includes(name) ? prev.filter((s) => s !== name) : [...prev, name]));
  };

  return (
    <Frame>
      <GlobalStyle />
      <Gradients />
      <Body>
        {/* Title bar */}
        <TitleBar>
          <Brand>NX</Brand>
          <Divider />
          <QuickAccess name="newFile" />
          <QuickAccess name="open" />
          <Divider />
          <QuickAccess name="save" />
          <Divider />
          <QuickAccess name="undo" />
          <Caret />
          <QuickAccess name="redo" />
          <Divider />
          <QuickAccess name="cut" />
          <QuickAccess name="copy" />
          <QuickAccess name="paste" />
          <Divider />
          <QuickAccess name="play" />
          <Caret />
          <Divider />
          <QuickAccess name="hand" />
          <Divider />
          <LabelButton type="button">
            <Icon name="switchWindow" size={16} />
            切换窗口
          </LabelButton>
          <LabelButton type="button" $pad={5}>
            <Icon name="window" size={16} />
            窗口
            <Caret />
          </LabelButton>
          <LabelButton type="button" $pad={2}>
            <span>
              导出(<u>E</u>)
            </span>
            <Caret />
          </LabelButton>
          <Caret />
          <Title>NX 11 - 建模 - [juxing.prt （修改的） ]</Title>
          <Vendor>SIEMENS</Vendor>
          {['minimize', 'maximize', 'close'].map((name) => (
            <IconButton key={name} type="button" $width={16} aria-label={name}>
              <Icon name={name} size={11} />
            </IconButton>
          ))}
        </TitleBar>

        {/* Ribbon tabs */}
        <TabBar>
          <FileButton type="button">文件(F)</FileButton>
          {tabs.map((tab) => (
            <Tab key={tab} type="button" $active={tab === activeTab} onClick={() => setActiveTab(tab)}>
              {tab}
            </Tab>
          ))}
          <TabTools>
            <Search>
              <input type="text" placeholder="查找命令" aria-label="查找命令" />
              <Icon name="magnifier" size={12} />
            </Search>
            <IconButton type="button" $width={20} aria-label="fullscreen">
              <Icon name="fullscreen" size={12} />
            </IconButton>
            <IconButton type="button" $width={20} aria-label="collapse">
              <Icon name="collapse" size={12} />
            </IconButton>
            <IconButton type="button" $width={20} aria-label="help">
              <Icon name="help" size={11} />
            </IconButton>
            {['boldMinimize', 'restore', 'boldClose'].map((name) => (
              <IconButton key={name} type="button" $width={15} aria-label={name}>
                <Icon name={name} size={10} />
              </IconButton>
            ))}
          </TabTools>
        </TabBar>

        {/* Ribbon */}
        <Ribbon>
          <Group>
            <GroupTools>
              <Tools rows={[['sketchTask', 'sketch'], ['profile', 'extrudeArrow']]} />
              <Big icon="curveBig" label="草图曲线" />
            </GroupTools>
            <Footer label="直接草图" />
          </Group>
          <Group>
            <GroupTools>
              <ToolRows $width="76px">
                <ToolRow>
                  <Tool type="button" aria-label="datum">
                    <Icon name="datum" />
                  </Tool>
                  <Caret />
                  <Tool type="button" aria-label="revolve">
                    <Icon name="revolve" />
                  </Tool>
                </ToolRow>
                <ToolRow>
                  <Tool type="button" aria-label="pattern">
                    <Icon name="pattern" />
                  </Tool>
                  <CaretBox />
                  <Tool type="button" aria-label="unite">
                    <Icon name="unite" />
                  </Tool>
                  <Caret />
                </ToolRow>
              </ToolRows>
              <Tools rows={featureRows} />
              <Big icon="boss" label="更多" />
            </GroupTools>
            <Footer label="特征" />
          </Group>
          <Group>
            <GroupTools>
              <Tools rows={syncRows} />
              <Big icon="swirl" label="更多" />
            </GroupTools>
            <Footer label="同步建模" />
          </Group>
          <Group>
            <GroupTools>
              <Tools rows={surfaceRows} />
              <Big icon="greenMesh" label="更多" />
            </GroupTools>
            <Footer label="曲面" />
          </Group>
          {singles.map((item) => (
            <SingleGroup key={item.icon}>
              <Big {...item} />
            </SingleGroup>
          ))}
          <RibbonEnd>
            <Caret />
          </RibbonEnd>
        </Ribbon>

        {/* Selection bar */}
        <SelectionBar>
          <LabelButton type="button" $pad={7}>
            <Icon name="menu" size={16} />
            <span>
              菜单(<u>M</u>)
            </span>
            <Caret width={6} />
          </LabelButton>
          <Divider $height={28} />
          <SelectBox $width={90}>
            <select aria-label="选择过滤器" defaultValue="无选择过滤器">
              <option>无选择过滤器</option>
              <option>实体</option>
            </select>
            <svg width="6" height="4" viewBox="0 0 6 4" aria-hidden="true">
              <path d="M0 0h6L3 4z" fill="#222" />
            </svg>
          </SelectBox>
          <SelectBox $width={94}>
            <select aria-label="选择范围" defaultValue="整个装配">
              <option>整个装配</option>
              <option>仅在工作部件内</option>
            </select>
            <svg width="6" height="4" viewBox="0 0 6 4" aria-hidden="true">
              <path d="M0 0h6L3 4z" fill="#222" />
            </svg>
          </SelectBox>
          <CaretBox $width={4} />
          <SnapButton type="button" aria-label="ghostCube">
            <Icon name="ghostCube" size={18} />
          </SnapButton>
          <SnapButton type="button" aria-label="ghostFilter">
            <Icon name="ghostFilter" size={16} />
          </SnapButton>
          <SnapButton type="button" aria-label="filter">
            <Icon name="filter" size={16} />
          </SnapButton>
          <Caret width={6} />
          <SnapButton type="button" aria-label="ghostMove">
            <Icon name="ghostMove" size={17} />
          </SnapButton>
          <SnapButton type="button" aria-label="ghostTree">
            <Icon name="ghostTree" size={17} />
          </SnapButton>
          <SnapButton type="button" aria-label="marquee">
            <Icon name="marquee" size={17} />
          </SnapButton>
          <Caret width={6} />
          {snapGroups.map((group) => (
            <SnapGroup key={group[0]}>
              {group.map((name) => (
                <SnapButton
                  key={name}
                  type="button"
                  aria-label={name}
                  $on={snaps.includes(name)}
                  onClick={() => toggleSnap(name)}
                >
                  <Icon name={name} size={17} />
                </SnapButton>
              ))}
            </SnapGroup>
          ))}
          <BarEnd>
            <Divider $height={28} />
            {['zoomBox', 'pan', 'rotate', 'fit'].map((name) => (
              <SnapButton key={name} type="button" aria-label={name}>
                <Icon name={name} size={16} />
              </SnapButton>
            ))}
            <Caret />
            <SnapButton type="button" aria-label="section">
              <Icon name="section" size={16} />
            </SnapButton>
            <Caret />
            <Stack>
              <button type="button" aria-label="shaded">
                <Icon name="shaded" size={10} />
                <Caret />
              </button>
              <button type="button" aria-label="play">
                <Icon name="play" size={10} />
                <Caret />
              </button>
            </Stack>
            <Divider $height={28} />
            <CaretBox $width={10} />
            <Caret width={10} />
          </BarEnd>
        </SelectionBar>

        {/* Work area */}
        <Work>
          <Rail>
            {railItems.map((item) => (
              <RailButton key={item.icon} type="button" aria-label={item.icon} $active={item.active} $gap={item.gap}>
                <Icon name={item.icon} size={item.size || 16} />
              </RailButton>
            ))}
          </Rail>
          <Navigator>
            <PanelTitle>
              <h2>装配导航器</h2>
              <Icon name="maximize" size={11} />
            </PanelTitle>
            <TableArea>
              <Tree>
                <colgroup>
                  <col />
                  <col width="24" />
                  <col width="16" />
                  <col width="16" />
                  <col width="14" />
                </colgroup>
                <thead>
                  <tr>
                    <th>描述性部件名</th>
                    <th>信息</th>
                    <th>只</th>
                    <th>已</th>
                    <th>数</th>
                  </tr>
                </thead>
                <tbody>
                  <tr>
                    <td>
                      <Node as="span">
                        <Icon name="folder" size={11} />
                        截面
                      </Node>
                    </td>
                    <td />
                    <td />
                    <td />
                    <td />
                  </tr>
                  <tr>
                    <td>
                      <Node $bold>
                        <Check type="checkbox" checked={loaded} onChange={() => setLoaded(!loaded)} />
                        <Icon name="part" size={10} />
                        juxing
                      </Node>
                    </td>
                    <td />
                    <td>
                      <Icon name="save" size={10} />
                    </td>
                    <td>
                      <Icon name="edit" size={10} />
                    </td>
                    <td />
                  </tr>
                  {blankRows.map((row) => (
                    <tr key={row}>
                      <td />
                      <td />
                      <td />
                      <td />
                      <td />
                    </tr>
                  ))}
                </tbody>
              </Tree>
            </TableArea>
            <ScrollBar>
              <ScrollArrow type="button" aria-label="向左">
                <Chevron d="M5 1L2 4l3 3" />
              </ScrollArrow>
              <ScrollThumb />
              <ScrollArrow type="button" aria-label="向右" $end>
                <Chevron d="M3 1l3 3-3 3" />
              </ScrollArrow>
            </ScrollBar>
            <Splitter />
            <Section type="button">
              预览
              <Chevron d="M1 2l3 4 3-4" />
            </Section>
            <Section type="button">
              相依性
              <Chevron d="M1 2l3 4 3-4" />
            </Section>
          </Navigator>

          <Canvas>
            <Placed $x={239} $y={54}>
              <svg width="192" height="224" viewBox="545 215 192 224" role="img" aria-label="juxing">
                <g stroke="#4a4a4a" strokeWidth="0.900" strokeLinejoin="round">
                  <path d="M610 216l125 41-55 76-125-41z" fill="#ffffff" />
                  <path d="M555 292l125 41-9 104-125-40z" fill="#707070" />
                  <path d="M680 333l55-76-9 105-55 75z" fill="#999999" />
                </g>
              </svg>
            </Placed>
            <Note $x={129} $y={101}>
              <span>放大模型</span>
              <svg width="12" height="40" viewBox="0 0 12 40" aria-hidden="true">
                <path d="M6 0l6 11-4-2-1.500 31L4 9l-4 2z" fill="#fa2010" />
              </svg>
            </Note>
            <Note $x={132} $y={235}>
              <span>缩小模型</span>
              <svg width="12" height="34" viewBox="0 0 12 34" aria-hidden="true">
                <path d="M6 34l6-12-4 2L6 0 4 24l-4-2z" fill="#fa2010" />
              </svg>
            </Note>
            <Placed $x={30} $y={356}>
              <svg width="34" height="40" viewBox="336 517 34 40" role="img" aria-label="坐标轴">
                <path d="M346 526l8-2 7 4-1 13-6 5-12-3z" fill="#d8d8d8" stroke="#b4b4b4" strokeWidth="0.800" />
                <path d="M346 534l8 3 7-8M354 537v9M341 543l12-17" fill="none" stroke="#a8bca8" strokeWidth="0.800" />
                <path d="M341.500 543v-14" stroke="#2038b8" strokeWidth="1.800" />
                <path d="M339 531l2.500-7 2.500 7z" fill="#2038b8" />
                <path d="M341 543l16 5" stroke="#d02020" strokeWidth="1.600" />
                <path d="M356 545l7 5-7 0z" fill="#d02020" />
                <circle cx="341" cy="543.500" r="2.600" fill="#8c8c8c" />
                <path d="M340 520h4l-4 5h4" fill="none" stroke="#4058e8" strokeWidth="1" />
                <path d="M363.500 549l4.500 5M368 549l-4.500 5" stroke="#e05050" strokeWidth="1" />
              </svg>
            </Placed>
            <Watermark>
              <svg width="82" height="92" viewBox="766 488 82 92" overflow="visible" aria-hidden="true">
                <g fill="#ffffff" stroke="#e0e0e0" strokeWidth="1.500">
                  <ellipse cx="848" cy="502" rx="7" ry="9.500" />
                  <ellipse cx="864" cy="503" rx="7" ry="9.500" />
                  <ellipse cx="835" cy="515" rx="7" ry="9" />
                  <ellipse cx="873" cy="519" rx="7" ry="9" />
                  <path d="M838 540c0-12 5-23 16-23s16 11 16 23z" />
                  <text x="766" y="547" fontFamily="Liberation Sans" fontWeight="700" fontSize="40">B</text>
                  <text x="767" y="574" fontFamily="Liberation Sans" fontSize="18" strokeWidth="1">jin</text>
                </g>
              </svg>
            </Watermark>
          </Canvas>
        </Work>
        <StatusBar>选择对象并使用 MB3，或者双击某一对象</StatusBar>
      </Body>
      <BottomStripe />
      <SiteBadge href="#">
        <SiteName>我爱学教程</SiteName>
        <SiteUrl>www.52xjc.com</SiteUrl>
      </SiteBadge>
    </Frame>
  );
};

export default App;
